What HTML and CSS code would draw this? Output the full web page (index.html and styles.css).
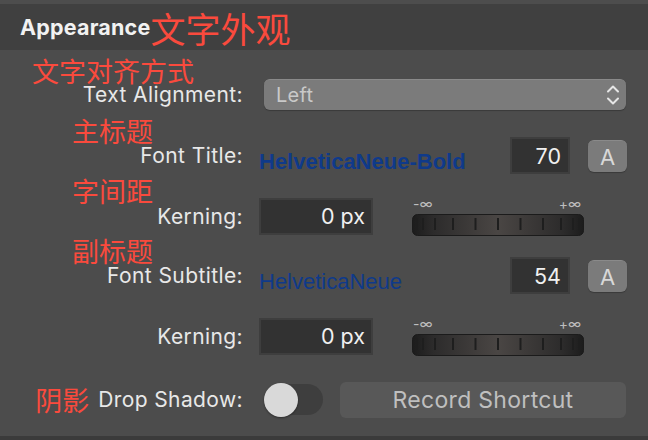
FILE: index.html
```html
<!DOCTYPE html>
<html>
<head>
<meta charset="utf-8">
<link rel="stylesheet" href="styles.css">
</head>
<body>
<div class="panel">
  <div class="topstrip"></div>
  <header class="header"><span class="title">Appearance</span><span class="cn-title">文字外观</span></header>
  <div class="content">
    <div class="note note-wide">文字对齐方式</div>
    <div class="row">
      <div class="label">Text Alignment:</div>
      <div class="ctrl">
        <div class="popup">
          <span class="popup-text">Left</span>
          <svg class="chev" width="14" height="22" viewBox="0 0 14 22"><path d="M2 7.5 L7 2.5 L12 7.5 M2 14.5 L7 19.5 L12 14.5" fill="none" stroke="#e6e6e6" stroke-width="2" stroke-linecap="round" stroke-linejoin="round"/></svg>
        </div>
      </div>
    </div>

    <div class="note">主标题</div>
    <div class="row">
      <div class="label">Font Title:</div>
      <div class="ctrl">
        <span class="font-name font-bold">HelveticaNeue-Bold</span>
        <div class="field field-num">70</div>
        <div class="abtn">A</div>
      </div>
    </div>

    <div class="note">字间距</div>
    <div class="row">
      <div class="label">Kerning:</div>
      <div class="ctrl">
        <div class="field field-kern">0 px</div>
        <div class="slider">
          <div class="slider-labels"><span>-∞</span><span>+∞</span></div>
          <svg class="wheel" width="172" height="22" viewBox="0 0 172 22">
            <defs>
              <linearGradient id="wg1" x1="0" x2="1" y1="0" y2="0">
                <stop offset="0" stop-color="#1c1c1c"/>
                <stop offset="0.12" stop-color="#2c2b2b"/>
                <stop offset="0.5" stop-color="#4a4644"/>
                <stop offset="0.88" stop-color="#2c2b2b"/>
                <stop offset="1" stop-color="#1c1c1c"/>
              </linearGradient>
            </defs>
            <rect x="0.5" y="0.5" width="171" height="21" rx="5" fill="url(#wg1)" stroke="#1b1b1b"/>
            <g stroke="#1e1e1e" stroke-width="2">
              <line x1="5" y1="4" x2="5" y2="16"/>
              <line x1="11" y1="4" x2="11" y2="16"/>
              <line x1="23" y1="4" x2="23" y2="16"/>
              <line x1="41" y1="4" x2="41" y2="16"/>
              <line x1="63.5" y1="4" x2="63.5" y2="16"/>
              <line x1="86" y1="4" x2="86" y2="16"/>
              <line x1="108.5" y1="4" x2="108.5" y2="16"/>
              <line x1="131" y1="4" x2="131" y2="16"/>
              <line x1="149" y1="4" x2="149" y2="16"/>
              <line x1="161" y1="4" x2="161" y2="16"/>
              <line x1="167" y1="4" x2="167" y2="16"/>
            </g>
          </svg>
        </div>
      </div>
    </div>

    <div class="note">副标题</div>
    <div class="row">
      <div class="label">Font Subtitle:</div>
      <div class="ctrl">
        <span class="font-name">HelveticaNeue</span>
        <div class="field field-num">54</div>
        <div class="abtn">A</div>
      </div>
    </div>

    <div class="note"></div>
    <div class="row">
      <div class="label">Kerning:</div>
      <div class="ctrl">
        <div class="field field-kern">0 px</div>
        <div class="slider">
          <div class="slider-labels"><span>-∞</span><span>+∞</span></div>
          <svg class="wheel" width="172" height="22" viewBox="0 0 172 22">
            <defs>
              <linearGradient id="wg2" x1="0" x2="1" y1="0" y2="0">
                <stop offset="0" stop-color="#1c1c1c"/>
                <stop offset="0.12" stop-color="#2c2b2b"/>
                <stop offset="0.5" stop-color="#4a4644"/>
                <stop offset="0.88" stop-color="#2c2b2b"/>
                <stop offset="1" stop-color="#1c1c1c"/>
              </linearGradient>
            </defs>
            <rect x="0.5" y="0.5" width="171" height="21" rx="5" fill="url(#wg2)" stroke="#1b1b1b"/>
            <g stroke="#1e1e1e" stroke-width="2">
              <line x1="5" y1="4" x2="5" y2="16"/>
              <line x1="11" y1="4" x2="11" y2="16"/>
              <line x1="23" y1="4" x2="23" y2="16"/>
              <line x1="41" y1="4" x2="41" y2="16"/>
              <line x1="63.5" y1="4" x2="63.5" y2="16"/>
              <line x1="86" y1="4" x2="86" y2="16"/>
              <line x1="108.5" y1="4" x2="108.5" y2="16"/>
              <line x1="131" y1="4" x2="131" y2="16"/>
              <line x1="149" y1="4" x2="149" y2="16"/>
              <line x1="161" y1="4" x2="161" y2="16"/>
              <line x1="167" y1="4" x2="167" y2="16"/>
            </g>
          </svg>
        </div>
      </div>
    </div>

    <div class="row row-last">
      <div class="label"><span class="note-inline">阴影</span>Drop Shadow:</div>
      <div class="ctrl">
        <div class="toggle"><div class="knob"></div></div>
        <div class="record">Record Shortcut</div>
      </div>
    </div>
  </div>
  <div class="bottomstrip"></div>
</div>
</body>
</html>
```

FILE: styles.css
```css
html, body {
  margin: 0;
  padding: 0;
  background: #4c4c4c;
}
body {
  width: 648px;
  height: 440px;
  overflow: hidden;
  font-family: "Inter", "Noto Sans CJK SC", sans-serif;
  color: #e8e8e8;
}
.panel {
  width: 648px;
  height: 440px;
  display: flex;
  flex-direction: column;
  background: #4c4c4c;
}
.topstrip {
  height: 4px;
  background: #4d4d4d;
}
.header {
  height: 46px;
  background: #404040;
  display: flex;
  align-items: center;
  padding-left: 20px;
}
.title {
  font-weight: 700;
  font-size: 21.5px;
  letter-spacing: 0.2px;
  color: #f2f2f2;
}
.cn-title {
  font-family: "Noto Sans CJK SC", sans-serif;
  font-size: 35px;
  line-height: 35px;
  color: #fa4a3d;
  margin-top: 1px;
}
.content {
  flex: 1;
  padding-top: 3px;
}
.note {
  height: 17px;
  margin-top: 6px;
  padding-left: 72px;
  font-family: "Noto Sans CJK SC", sans-serif;
  font-size: 27px;
  line-height: 24px;
  color: #fa4a3d;
  white-space: nowrap;
}
.note.note-wide {
  padding-left: 32px;
}
.row {
  display: grid;
  grid-template-columns: 243px 1fr;
  column-gap: 16px;
  height: 37px;
  padding-right: 21px;
}
.label {
  display: flex;
  align-items: center;
  justify-content: flex-end;
  font-size: 21px;
  letter-spacing: 0.4px;
  color: #e8e8e8;
  white-space: nowrap;
}
.ctrl {
  display: flex;
  align-items: center;
}
.popup {
  flex: 1;
  margin-left: 5px;
  margin-right: 1px;
  height: 31px;
  box-sizing: border-box;
  border-radius: 6px;
  background: #7b7b7b;
  border-top: 1px solid #8a8a8a;
  box-shadow: 0 1px 1px rgba(0,0,0,0.25);
  display: flex;
  align-items: center;
  justify-content: space-between;
  padding: 0 6px 0 12px;
}
.popup-text {
  font-size: 20px;
  letter-spacing: 0.3px;
  color: #c9c9c9;
}
.chev {
  display: block;
}
.font-name {
  flex: 1;
  font-family: "Liberation Sans", "Inter", sans-serif;
  font-size: 22px;
  color: #0f3a8a;
  padding-top: 13px;
}
.font-name.font-bold {
  font-weight: 700;
}
.field {
  height: 37px;
  box-sizing: border-box;
  background: #323232;
  border: 2px solid #3e3e3e;
  display: flex;
  align-items: center;
  justify-content: flex-end;
  font-size: 21.5px;
  color: #f0f0f0;
}
.field-num {
  width: 60px;
  padding-right: 7px;
}
.field-kern {
  width: 114px;
  padding-right: 6px;
}
.abtn {
  width: 39px;
  height: 32px;
  margin-left: 18px;
  box-sizing: border-box;
  border-radius: 6px;
  background: #7b7b7b;
  border-top: 1px solid #8a8a8a;
  box-shadow: 0 1px 1px rgba(0,0,0,0.25);
  display: flex;
  align-items: center;
  justify-content: center;
  font-size: 22px;
  color: #d8d8d8;
  margin-top: 1px;
}
.slider {
  align-self: flex-start;
  margin-top: 1px;
  margin-left: 39px;
  width: 172px;
}
.slider-labels {
  height: 14px;
  display: flex;
  justify-content: space-between;
  padding: 0 3px 0 1px;
  font-size: 14px;
  line-height: 14px;
  color: #bdbdbd;
  margin-bottom: 3px;
}
.wheel {
  display: block;
}
.row-last {
  margin-top: 27px;
  height: 36px;
}
.note-inline {
  font-family: "Noto Sans CJK SC", sans-serif;
  font-size: 27px;
  letter-spacing: 0;
  color: #fa4a3d;
  margin-right: 9px;
}
.toggle {
  width: 59px;
  height: 31px;
  margin-left: 5px;
  border-radius: 16px;
  background: #3e3e3e;
  display: flex;
  align-items: center;
}
.knob {
  width: 34px;
  height: 34px;
  border-radius: 50%;
  background: #d9d9d9;
  box-shadow: 0 1px 2px rgba(0,0,0,0.4);
}
.record {
  flex: 1;
  margin-left: 17px;
  margin-right: 1px;
  height: 36px;
  border-radius: 6px;
  background: #585858;
  display: flex;
  align-items: center;
  justify-content: center;
  font-size: 23px;
  letter-spacing: 0.3px;
  color: #bfbfbf;
}
.bottomstrip {
  height: 4px;
  background: #3b3b3b;
}
```
